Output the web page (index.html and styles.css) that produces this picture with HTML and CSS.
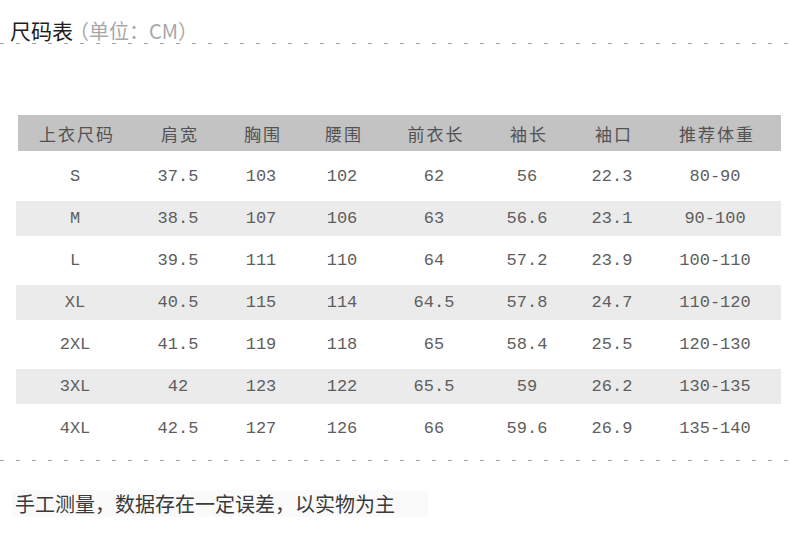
FILE: index.html
```html
<!DOCTYPE html>
<html lang="zh">
<head>
<meta charset="utf-8">
<title>尺码表</title>
<link rel="stylesheet" href="styles.css">
</head>
<body>
<div class="page">
  <div class="title"><span class="title-main">尺码表</span><span class="title-unit">（单位：CM）</span></div>
  <div class="dash"></div>
  <div class="table">
    <div class="row head">
      <div>上衣尺码</div><div>肩宽</div><div>胸围</div><div>腰围</div><div>前衣长</div><div>袖长</div><div>袖口</div><div>推荐体重</div>
    </div>
    <div class="row">
      <div>S</div><div>37.5</div><div>103</div><div>102</div><div>62</div><div>56</div><div>22.3</div><div>80-90</div>
    </div>
    <div class="row alt">
      <div>M</div><div>38.5</div><div>107</div><div>106</div><div>63</div><div>56.6</div><div>23.1</div><div>90-100</div>
    </div>
    <div class="row">
      <div>L</div><div>39.5</div><div>111</div><div>110</div><div>64</div><div>57.2</div><div>23.9</div><div>100-110</div>
    </div>
    <div class="row alt">
      <div>XL</div><div>40.5</div><div>115</div><div>114</div><div>64.5</div><div>57.8</div><div>24.7</div><div>110-120</div>
    </div>
    <div class="row">
      <div>2XL</div><div>41.5</div><div>119</div><div>118</div><div>65</div><div>58.4</div><div>25.5</div><div>120-130</div>
    </div>
    <div class="row alt">
      <div>3XL</div><div>42</div><div>123</div><div>122</div><div>65.5</div><div>59</div><div>26.2</div><div>130-135</div>
    </div>
    <div class="row">
      <div>4XL</div><div>42.5</div><div>127</div><div>126</div><div>66</div><div>59.6</div><div>26.9</div><div>135-140</div>
    </div>
  </div>
  <div class="dash dash-bottom"></div>
  <div class="note">手工测量，数据存在一定误差，以实物为主</div>
</div>
</body>
</html>
```

FILE: styles.css
```css
html, body {
  margin: 0;
  padding: 0;
  background: #ffffff;
}

.page {
  width: 790px;
  height: 537px;
  overflow: hidden;
  font-family: "Noto Sans CJK SC", "Noto Sans", sans-serif;
}

.title {
  padding: 17px 0 0 10px;
  height: 26px;
  line-height: 26px;
  display: flex;
  align-items: baseline;
}

.title-main {
  font-size: 21px;
  color: #1e1e1e;
}

.title-unit {
  font-size: 20px;
  color: #a8a8a8;
  margin-left: -4px;
}

.dash {
  height: 1px;
  background-image: repeating-linear-gradient(to right, #a0a0a0 0 4px, transparent 4px 16px);
}

.table {
  margin: 71px 0 0 16px;
  width: 765px;
  display: flex;
  flex-direction: column;
  gap: 7px;
}

.row {
  display: grid;
  grid-template-columns: 118px 88px 78px 84px 100px 86px 84px 122px;
  height: 35px;
  align-items: center;
  font-family: "Liberation Mono", "DejaVu Sans Mono", monospace;
  font-size: 17px;
  color: #5e5e5e;
}

.row > div {
  text-align: center;
}

.row.head {
  height: 36px;
  margin-left: 2px;
  margin-bottom: 1px;
  background: #c3c3c3;
  font-family: "Noto Sans CJK SC", "Noto Sans", sans-serif;
  font-size: 17px;
  letter-spacing: 2px;
  color: #525252;
}

.row.alt {
  background: #ebebeb;
}

.dash-bottom {
  margin-top: 14px;
}

.note {
  margin: 29px 0 0 12px;
  width: 413px;
  padding-left: 3px;
  height: 27px;
  line-height: 27px;
  font-size: 20px;
  color: #3a3a3a;
  background: #fafafa;
}
```
